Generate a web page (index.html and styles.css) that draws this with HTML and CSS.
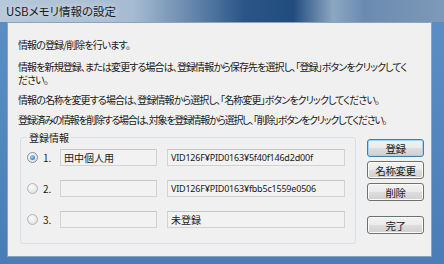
FILE: index.html
```html
<!DOCTYPE html>
<html lang="ja">
<head>
    <meta charset="UTF-8">
    <title>USBメモリ情報の設定</title>
    <link rel="stylesheet" href="styles.css">
</head>
<body>
    <div class="window">
        <div class="titlebar">USBメモリ情報の設定</div>
        <div class="client">
            <p class="msg first">情報の登録/削除を行います。</p>
            <p class="msg">情報を新規登録、または変更する場合は、登録情報から保存先を選択し、「登録」ボタンをクリックしてく<br>ださい。</p>
            <p class="msg">情報の名称を変更する場合は、登録情報から選択し、「名称変更」ボタンをクリックしてください。</p>
            <p class="msg tight">登録済みの情報を削除する場合は、対象を登録情報から選択し、「削除」ボタンをクリックしてください。</p>

            <div class="bottom">
                <fieldset class="group">
                    <legend>登録情報</legend>
                    <div class="row">
                        <span class="radio checked"></span>
                        <span class="num">1.</span>
                        <span class="field name">田中個人用</span>
                        <span class="field vid">VID126F¥PID0163¥5f40f146d2d00f</span>
                    </div>
                    <div class="row">
                        <span class="radio"></span>
                        <span class="num">2.</span>
                        <span class="field name"></span>
                        <span class="field vid">VID126F¥PID0163¥fbb5c1559e0506</span>
                    </div>
                    <div class="row">
                        <span class="radio"></span>
                        <span class="num">3.</span>
                        <span class="field name"></span>
                        <span class="field vid jp">未登録</span>
                    </div>
                </fieldset>
                <div class="buttons">
                    <button class="btn default">登録</button>
                    <button class="btn">名称変更</button>
                    <button class="btn">削除</button>
                    <button class="btn done">完了</button>
                </div>
            </div>
        </div>
    </div>
</body>
</html>
```

FILE: styles.css
```css
body {
    margin: 0;
    font-family: "Noto Sans CJK JP", "Noto Sans", sans-serif;
    font-feature-settings: "palt";
    color: #1a1a1a;
}
.window {
    width: 444px;
    height: 264px;
    box-sizing: border-box;
    background: linear-gradient(to bottom, #5d8fc6, #4a7db8);
    display: flex;
    flex-direction: column;
}
.titlebar {
    height: 22px;
    line-height: 22px;
    padding-left: 6px;
    font-size: 11.5px;
    color: #1c1c1c;
    background: linear-gradient(to right, #b7c8da 0%, #a6bbd1 30%, #5d7fa6 45%, #2a5586 55%, #214c7e 66%, #8da7c2 75%, #6a8bb0 82%, #7e99b8 100%);
    text-shadow: 0 0 6px #e8eef5;
}
.client {
    flex: 1;
    margin: 0 12px 7px 7px;
    border: 1px solid #8ea3bb;
    background: #f0f0f0;
    padding: 15px 10px 0 10px;
    font-size: 10px;
    letter-spacing: -0.9px;
}
.msg {
    margin: 7px 0 0;
    line-height: 13px;
    white-space: nowrap;
}
.msg.first {
    margin: 0 0 9px;
}
.msg.tight {
    letter-spacing: -1.3px;
}
.bottom {
    display: flex;
    align-items: flex-start;
    margin-top: 5px;
}
.group {
    margin: 0 0 0 2px;
    width: 337px;
    box-sizing: border-box;
    border: 1px solid #d5dfe5;
    border-radius: 3px;
    padding: 5px 10px 15px 6px;
}
.group legend {
    padding: 0 2px;
    line-height: 13px;
    letter-spacing: 0;
}
.row {
    display: flex;
    align-items: center;
    height: 17px;
    margin-bottom: 14px;
}
.row:last-child {
    margin-bottom: 0;
}
.radio {
    width: 11px;
    height: 11px;
    box-sizing: border-box;
    border-radius: 50%;
    border: 1px solid #b4b4b4;
    background: radial-gradient(circle at 40% 35%, #fdfdfd, #d9d9d9);
    margin-right: 5px;
    position: relative;
}
.radio.checked {
    border-color: #7a94b0;
}
.radio.checked::after {
    content: "";
    position: absolute;
    left: 2px;
    top: 2px;
    width: 5px;
    height: 5px;
    border-radius: 50%;
    background: radial-gradient(circle at 40% 35%, #a8d2f5, #1f5f9e);
}
.num {
    width: 17px;
    letter-spacing: 0;
}
.field {
    height: 17px;
    box-sizing: border-box;
    border: 1px solid #d0d3d6;
    border-top-color: #c4c7ca;
    background: #f2f2f2;
    line-height: 15px;
    padding-left: 3px;
    letter-spacing: 0;
}
.field.name {
    width: 97px;
}
.field.vid {
    width: 178px;
    margin-left: 10px;
    font-family: "Noto Sans", sans-serif;
    font-size: 9px;
    letter-spacing: -0.2px;
}
.field.vid.jp {
    font-family: "Noto Sans CJK JP", sans-serif;
    font-size: 10px;
    letter-spacing: 0;
}
.buttons {
    display: flex;
    flex-direction: column;
    gap: 4px;
    margin: 8px 0 0 11px;
}
.btn {
    width: 57px;
    height: 18px;
    padding: 0;
    font-family: inherit;
    font-size: 10.5px;
    letter-spacing: -0.4px;
    color: #1a1a1a;
    border: 1px solid #707070;
    border-radius: 3px;
    background: linear-gradient(to bottom, #f2f2f2 0%, #ebebeb 48%, #dddddd 52%, #cfcfcf 100%);
    box-shadow: inset 0 0 0 1px #fbfbfb;
}
.btn.default {
    border-color: #3c7fb1;
    box-shadow: inset 0 0 0 1px #9fd5f8;
}
.btn.done {
    margin-top: 11px;
}
```
